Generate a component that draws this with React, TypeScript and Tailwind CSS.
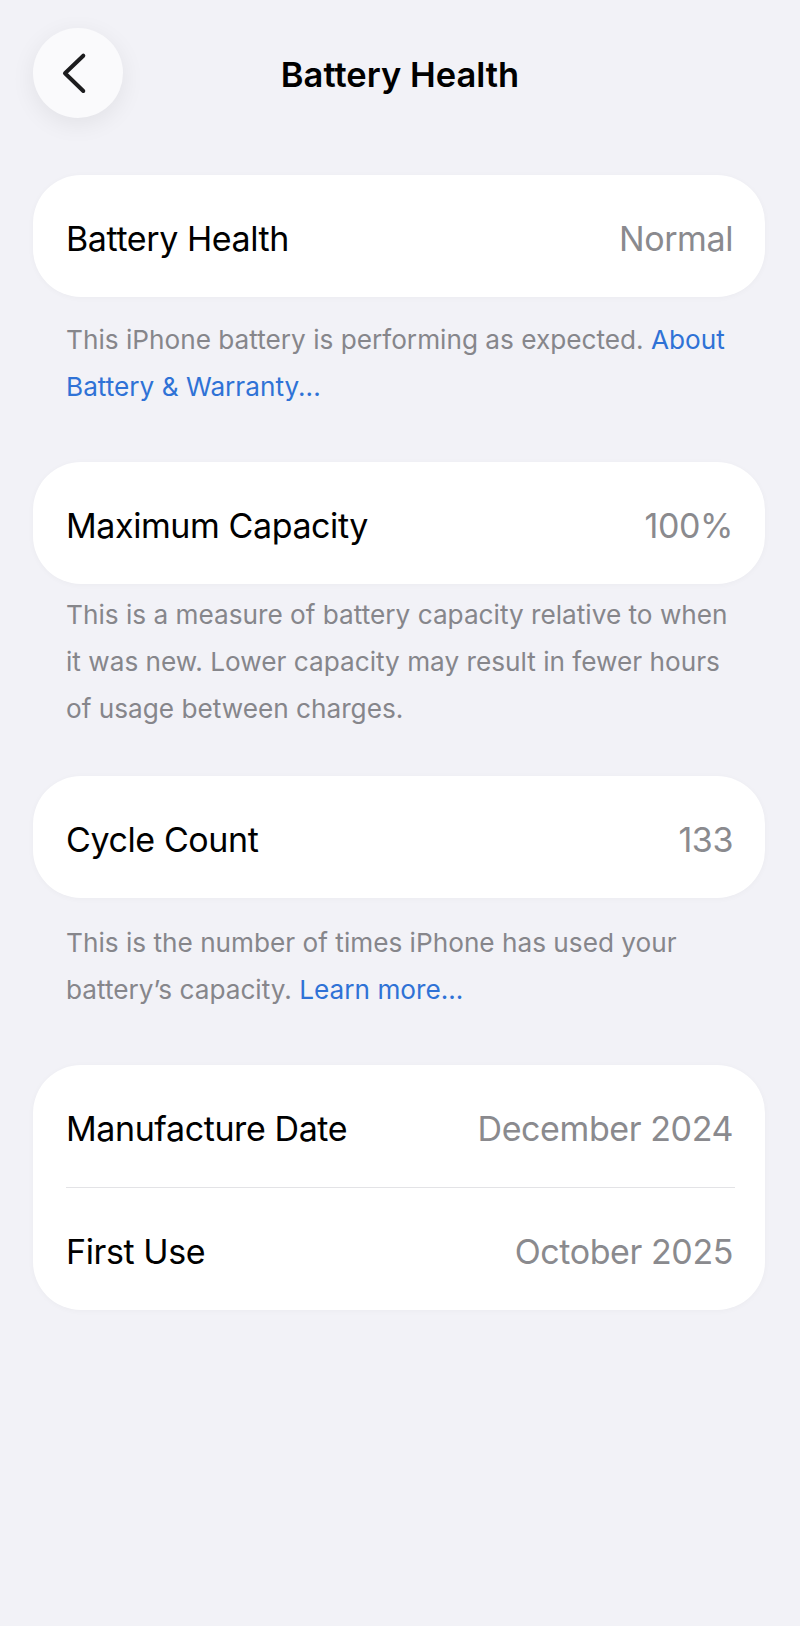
import React from 'react';

const font = { fontFamily: 'Inter, "Noto Sans", sans-serif' };

const Row = ({ label, value }: { label: string; value: string }) => (
  <div className="h-[122px] flex items-center justify-between pl-[33px] pr-[32px] pt-[4px]">
    <span className="text-[34px] text-black tracking-[-0.012em]">{label}</span>
    <span className="text-[34px] text-[#8a8a8e] tracking-[-0.012em]">{value}</span>
  </div>
);

const Card = ({ children }: { children: React.ReactNode }) => (
  <div className="bg-white rounded-[48px] shadow-[0_1px_6px_rgba(0,0,0,0.03)] overflow-hidden">
    {children}
  </div>
);

const Footer = ({ className, children }: { className: string; children: React.ReactNode }) => (
  <p className={`pl-[33px] whitespace-nowrap text-[26.2px] leading-[47px] text-[#86868b] ${className}`}>
    {children}
  </p>
);

const Link = ({ children }: { children: React.ReactNode }) => (
  <span className="text-[#2f72d6]">{children}</span>
);

export default function App() {
  return (
    <div className="min-h-[1626px] w-[800px] bg-[#f2f2f7] pl-[33px] pr-[35px]" style={font}>
      {/* header */}
      <div className="relative h-[175px] pt-[28px]">
        <button className="w-[90px] h-[90px] rounded-full bg-[#fafafc] shadow-[0_6px_24px_rgba(0,0,0,0.07)] flex items-center justify-center">
          <svg width="90" height="90" viewBox="0 0 90 90" fill="none">
            <path
              d="M50.3 27.7 L32 45.3 L50.3 63"
              stroke="#1c1c1e"
              strokeWidth="4"
              strokeLinecap="round"
              strokeLinejoin="round"
            />
          </svg>
        </button>
        <h1 className="absolute left-0 right-0 top-[50px] text-center text-[34.5px] leading-[50px] font-semibold text-black -ml-[33px] -mr-[35px]">
          Battery Health
        </h1>
      </div>

      <Card>
        <Row label="Battery Health" value="Normal" />
      </Card>
      <Footer className="mt-[19px]">
        This iPhone battery is performing as expected. <Link>About</Link>
        <br />
        <Link>Battery &amp; Warranty...</Link>
      </Footer>

      <div className="mt-[52px]">
        <Card>
          <Row label="Maximum Capacity" value="100%" />
        </Card>
      </div>
      <Footer className="mt-[7px]">
        This is a measure of battery capacity relative to when
        <br />
        it was new. Lower capacity may result in fewer hours
        <br />
        of usage between charges.
      </Footer>

      <div className="mt-[44px]">
        <Card>
          <Row label="Cycle Count" value="133" />
        </Card>
      </div>
      <Footer className="mt-[21px]">
        This is the number of times iPhone has used your
        <br />
        battery’s capacity. <Link>Learn more...</Link>
      </Footer>

      <div className="mt-[52px]">
        <Card>
          <Row label="Manufacture Date" value="December 2024" />
          <div className="ml-[33px] mr-[30px] h-px bg-[#e3e3e6]" />
          <Row label="First Use" value="October 2025" />
        </Card>
      </div>
    </div>
  );
}
